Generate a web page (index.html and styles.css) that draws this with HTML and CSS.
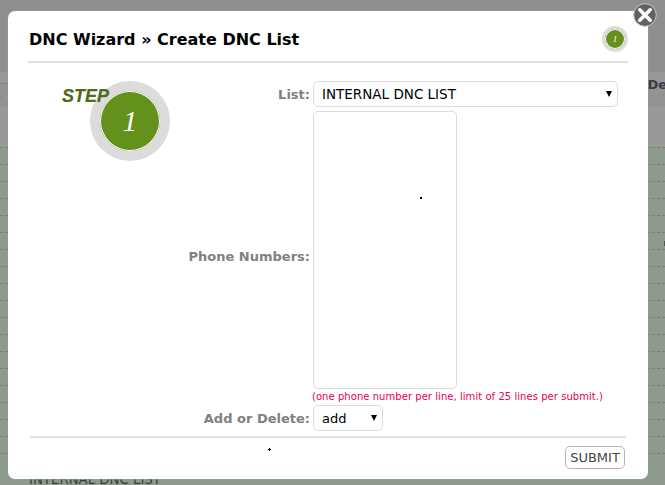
FILE: index.html
```html
<!DOCTYPE html>
<html lang="en">
<head>
<meta charset="utf-8">
<title>DNC Wizard</title>
<link rel="stylesheet" href="styles.css">
</head>
<body>
<div class="backdrop">
  <div class="bd-top"></div>
  <div class="bd-sub"><span class="bd-de">De</span></div>
  <div class="bd-head"><span class="bd-s">s</span></div>
  <div class="bd-gap"></div>
  <div class="bd-row"></div><div class="bd-row"></div><div class="bd-row"></div><div class="bd-row"></div>
  <div class="bd-row"></div><div class="bd-row bd-mark"></div><div class="bd-row"></div><div class="bd-row"></div>
  <div class="bd-row"></div><div class="bd-row"></div><div class="bd-row"></div><div class="bd-row"></div>
  <div class="bd-row"></div><div class="bd-row"></div><div class="bd-row"></div><div class="bd-row"></div>
  <div class="bd-row"></div><div class="bd-row"></div><div class="bd-row"></div>
  <div class="bd-last">INTERNAL DNC LIST</div>
</div>

<div class="modal">
  <button class="close" type="button" aria-label="Close">
    <svg width="24" height="24" viewBox="0 0 24 24"><circle cx="12" cy="12" r="11.300" fill="#626262" stroke="#c8c8c8" stroke-width="1"/><path d="M6.800 6.800l10.400 10.400M17.200 6.800l-10.400 10.400" stroke="#fff" stroke-width="3.600" stroke-linecap="round"/></svg>
  </button>
  <header class="modal-head">
    <h2 class="title">DNC Wizard » Create DNC List</h2>
    <span class="mini-step"><span class="mini-num">1</span></span>
  </header>
  <form class="wizard">
    <div class="step-badge">
      <span class="step-word">STEP</span>
      <span class="step-circle"><span class="step-num">1</span></span>
    </div>
    <label class="lbl">List:</label>
    <div class="sel-wrap sel-list"><select class="ctl sel sel-big"><option>INTERNAL DNC LIST</option></select></div>
    <label class="lbl">Phone Numbers:</label>
    <div class="phone-cell">
      <textarea class="ctl phones"></textarea>
      <div class="hint">(one phone number per line, limit of 25 lines per submit.)</div>
    </div>
    <label class="lbl">Add or Delete:</label>
    <div class="sel-wrap sel-add"><select class="ctl sel"><option>add</option><option>delete</option></select></div>
  </form>
  <footer class="modal-foot">
    <button class="submit" type="button">SUBMIT</button>
  </footer>
  <i class="speck speck-a"></i>
  <i class="speck speck-b"></i>
</div>
</body>
</html>
```
FILE: styles.css
```css
* { box-sizing: border-box; }
html, body { margin: 0; height: 100%; overflow: hidden; }
body { background: #949494; font-family: "DejaVu Sans", Verdana, sans-serif; }

.backdrop { width: 665px; height: 485px; overflow: hidden; color: #3c3c44; }
.bd-top { height: 72px; background: #8f8f8f; }
.bd-sub { height: 11px; background: #999; display: flex; justify-content: flex-end; }
.bd-head { height: 24px; background: #939393; border-top: 1px solid #828282; }
.bd-s { display: block; font-size: 13px; line-height: 16px; margin-top: 4px; margin-left: -6px; }
.bd-de { font-size: 13px; font-weight: bold; line-height: 16px; margin-top: 5px; margin-right: -2px; height: 16px; }
.bd-gap { height: 40px; background: #999; }
.bd-row { height: 17px; background: #8f998d; border-top: 1px dashed #7a7f78; }
.bd-mark { display: flex; justify-content: flex-end; padding-top: 8px; }
.bd-mark::after { content: ""; width: 1px; height: 5px; background: #555; }
.bd-last { height: 17px; background: #8f998d; padding-left: 29px; font-size: 13.300px; line-height: 14px; padding-top: 3px; white-space: nowrap; }

.modal { position: absolute; left: 8px; top: 11px; width: 640px; height: 468px; background: #fff; border-radius: 7px; box-shadow: 0 0 0 1px rgba(120,170,150,.45); padding: 0 20px; }

.close { position: absolute; left: 625px; top: -8px; width: 24px; height: 24px; padding: 0; border: 0; background: none; display: block; }
.close svg { display: block; }

.modal-head { display: flex; justify-content: space-between; align-items: center; height: 52px; border-bottom: 2px solid #e0e0e0; padding-top: 6px; }
.title { margin: 2px 0 0 1px; font-size: 16px; line-height: 24px; font-weight: bold; color: #000; }
.mini-step { width: 26px; height: 26px; border-radius: 50%; background: #64901c; border: 3px solid #dcdcdc; display: flex; align-items: center; justify-content: center; box-shadow: inset 0 0 0 1px #fff; }
.mini-num { color: #fff; font: italic 9px/1 "Liberation Serif", serif; }

.wizard { position: relative; display: grid; grid-template-columns: 282px 1fr; column-gap: 3px; margin-top: 18px; align-items: center; }
.lbl { text-align: right; font-size: 13px; font-weight: bold; color: #808080; }
.ctl { border: 1px solid #dcdcdc; border-radius: 5px; background: #fff; color: #000; font-family: "DejaVu Sans", Verdana, sans-serif; font-size: 13px; padding: 0 8px; margin: 0; }
.sel-wrap { position: relative; height: 26px; }
.sel-wrap::after { content: ""; position: absolute; right: 6px; top: 10px; border-style: solid; border-width: 6px 3.500px 0; border-color: #000 transparent transparent; pointer-events: none; }
.sel { display: block; width: 100%; height: 26px; appearance: none; -webkit-appearance: none; }
.sel-big { font-size: 13.500px; }
.sel-list { width: 305px; }
.sel-add { width: 70px; }
.phone-cell { padding-top: 4px; }
.phones { display: block; width: 144px; height: 278px; resize: none; outline: 0; }
.hint { font-size: 10px; line-height: 13px; color: #e6004c; margin: 1px 0 0 -1px; height: 15px; white-space: nowrap; letter-spacing: .05px; }

.step-badge { position: absolute; left: 34px; top: 0; width: 110px; height: 80px; }
.step-word { position: absolute; left: 0; top: 5px; font: italic bold 18px/20px "Liberation Sans", Arial, sans-serif; color: #4e6b1a; z-index: 1; -webkit-text-stroke: .2px #4e6b1a; }
.step-circle { position: absolute; left: 28px; top: 0; width: 80px; height: 80px; border-radius: 50%; background: #64901c; border: 10px solid #dcdcdc; box-shadow: inset 0 0 0 1px #fff; display: flex; align-items: center; justify-content: center; }
.step-num { color: #fff; font: italic 30px/1 "Liberation Serif", serif; }

.modal-foot { margin: 5px 2px 0; border-top: 2px solid #e0e0e0; display: flex; justify-content: flex-end; padding-top: 8px; }
.submit { width: 60px; height: 23px; padding: 0; margin-right: 1px; border: 1px solid #b4b4b4; border-radius: 5px; background: #fff; color: #444; font-family: "DejaVu Sans", Verdana, sans-serif; font-size: 13px; }

.speck { position: absolute; background: #000; }
.speck-a { left: 412px; top: 186px; width: 2px; height: 2px; }
.speck-b { left: 261px; top: 438px; width: 1px; height: 1px; box-shadow: 1px 0 #000, -1px 0 #000, 0 1px #000, 0 -1px #000; }
```
